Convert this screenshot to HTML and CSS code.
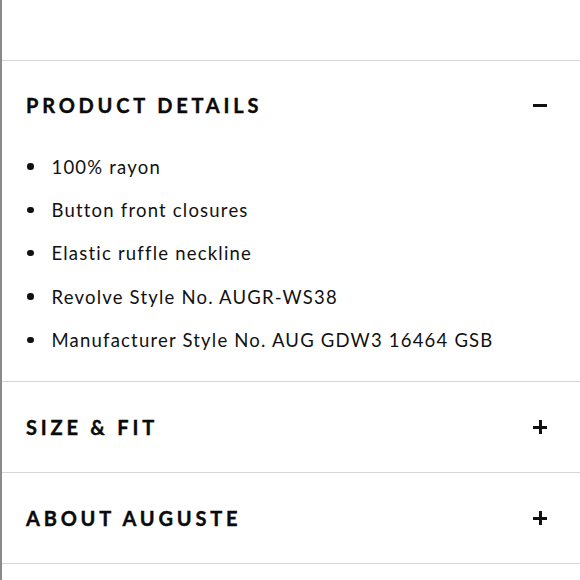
FILE: index.html
```html
<!DOCTYPE html>
<html>
<head>
<meta charset="utf-8">
<link rel="stylesheet" href="styles.css">
</head>
<body>
<div class="page">
  <div class="top"></div>
  <section class="acc open">
    <div class="head">
      <h2 class="title">PRODUCT DETAILS</h2>
      <span class="icon minus"></span>
    </div>
    <ul class="list">
      <li>100% rayon</li>
      <li>Button front closures</li>
      <li>Elastic ruffle neckline</li>
      <li>Revolve Style No. AUGR-WS38</li>
      <li>Manufacturer Style No. AUG GDW3 16464 GSB</li>
    </ul>
  </section>
  <section class="acc">
    <div class="head">
      <h2 class="title">SIZE &amp; FIT</h2>
      <span class="icon plus"></span>
    </div>
  </section>
  <section class="acc">
    <div class="head">
      <h2 class="title">ABOUT AUGUSTE</h2>
      <span class="icon plus"></span>
    </div>
  </section>
</div>
</body>
</html>
```
FILE: styles.css
```css
html, body {
  margin: 0;
  padding: 0;
  background: #fff;
}
.page {
  width: 580px;
  height: 580px;
  box-sizing: border-box;
  border-left: 2px solid #8a8a8a;
  overflow: hidden;
  font-family: "Lato", "Liberation Sans", sans-serif;
  color: #111;
}
.top {
  height: 60px;
  border-bottom: 1px solid #d6d6d6;
}
.acc {
  border-bottom: 1px solid #d6d6d6;
}
.head {
  display: flex;
  align-items: center;
  justify-content: space-between;
  height: 90px;
  padding: 0 33px 0 24px;
  box-sizing: border-box;
}
.acc.open .head {
  height: 84px;
  padding-top: 4px;
}
.title {
  margin: 0;
  font-size: 20px;
  font-weight: 700;
  letter-spacing: 3.8px;
  line-height: 24px;
  color: #0a0a0a;
  -webkit-text-stroke: 0.4px #0a0a0a;
}
.icon {
  position: relative;
  width: 14px;
  height: 14px;
}
.icon::before {
  content: "";
  position: absolute;
  left: 0;
  top: 6px;
  width: 14px;
  height: 2.5px;
  background: #111;
}
.plus::after {
  content: "";
  position: absolute;
  left: 6px;
  top: 0;
  width: 2.5px;
  height: 14px;
  background: #111;
}
.list {
  list-style: none;
  margin: 0;
  padding: 0 0 20px 24px;
}
.list li {
  display: flex;
  align-items: center;
  height: 43.3px;
  font-size: 18.5px;
  letter-spacing: 1.2px;
}
.list li::before {
  content: "";
  width: 6.5px;
  height: 6.5px;
  border-radius: 50%;
  background: #111;
  margin: 0 18px 0 1px;
  flex: none;
}
```
